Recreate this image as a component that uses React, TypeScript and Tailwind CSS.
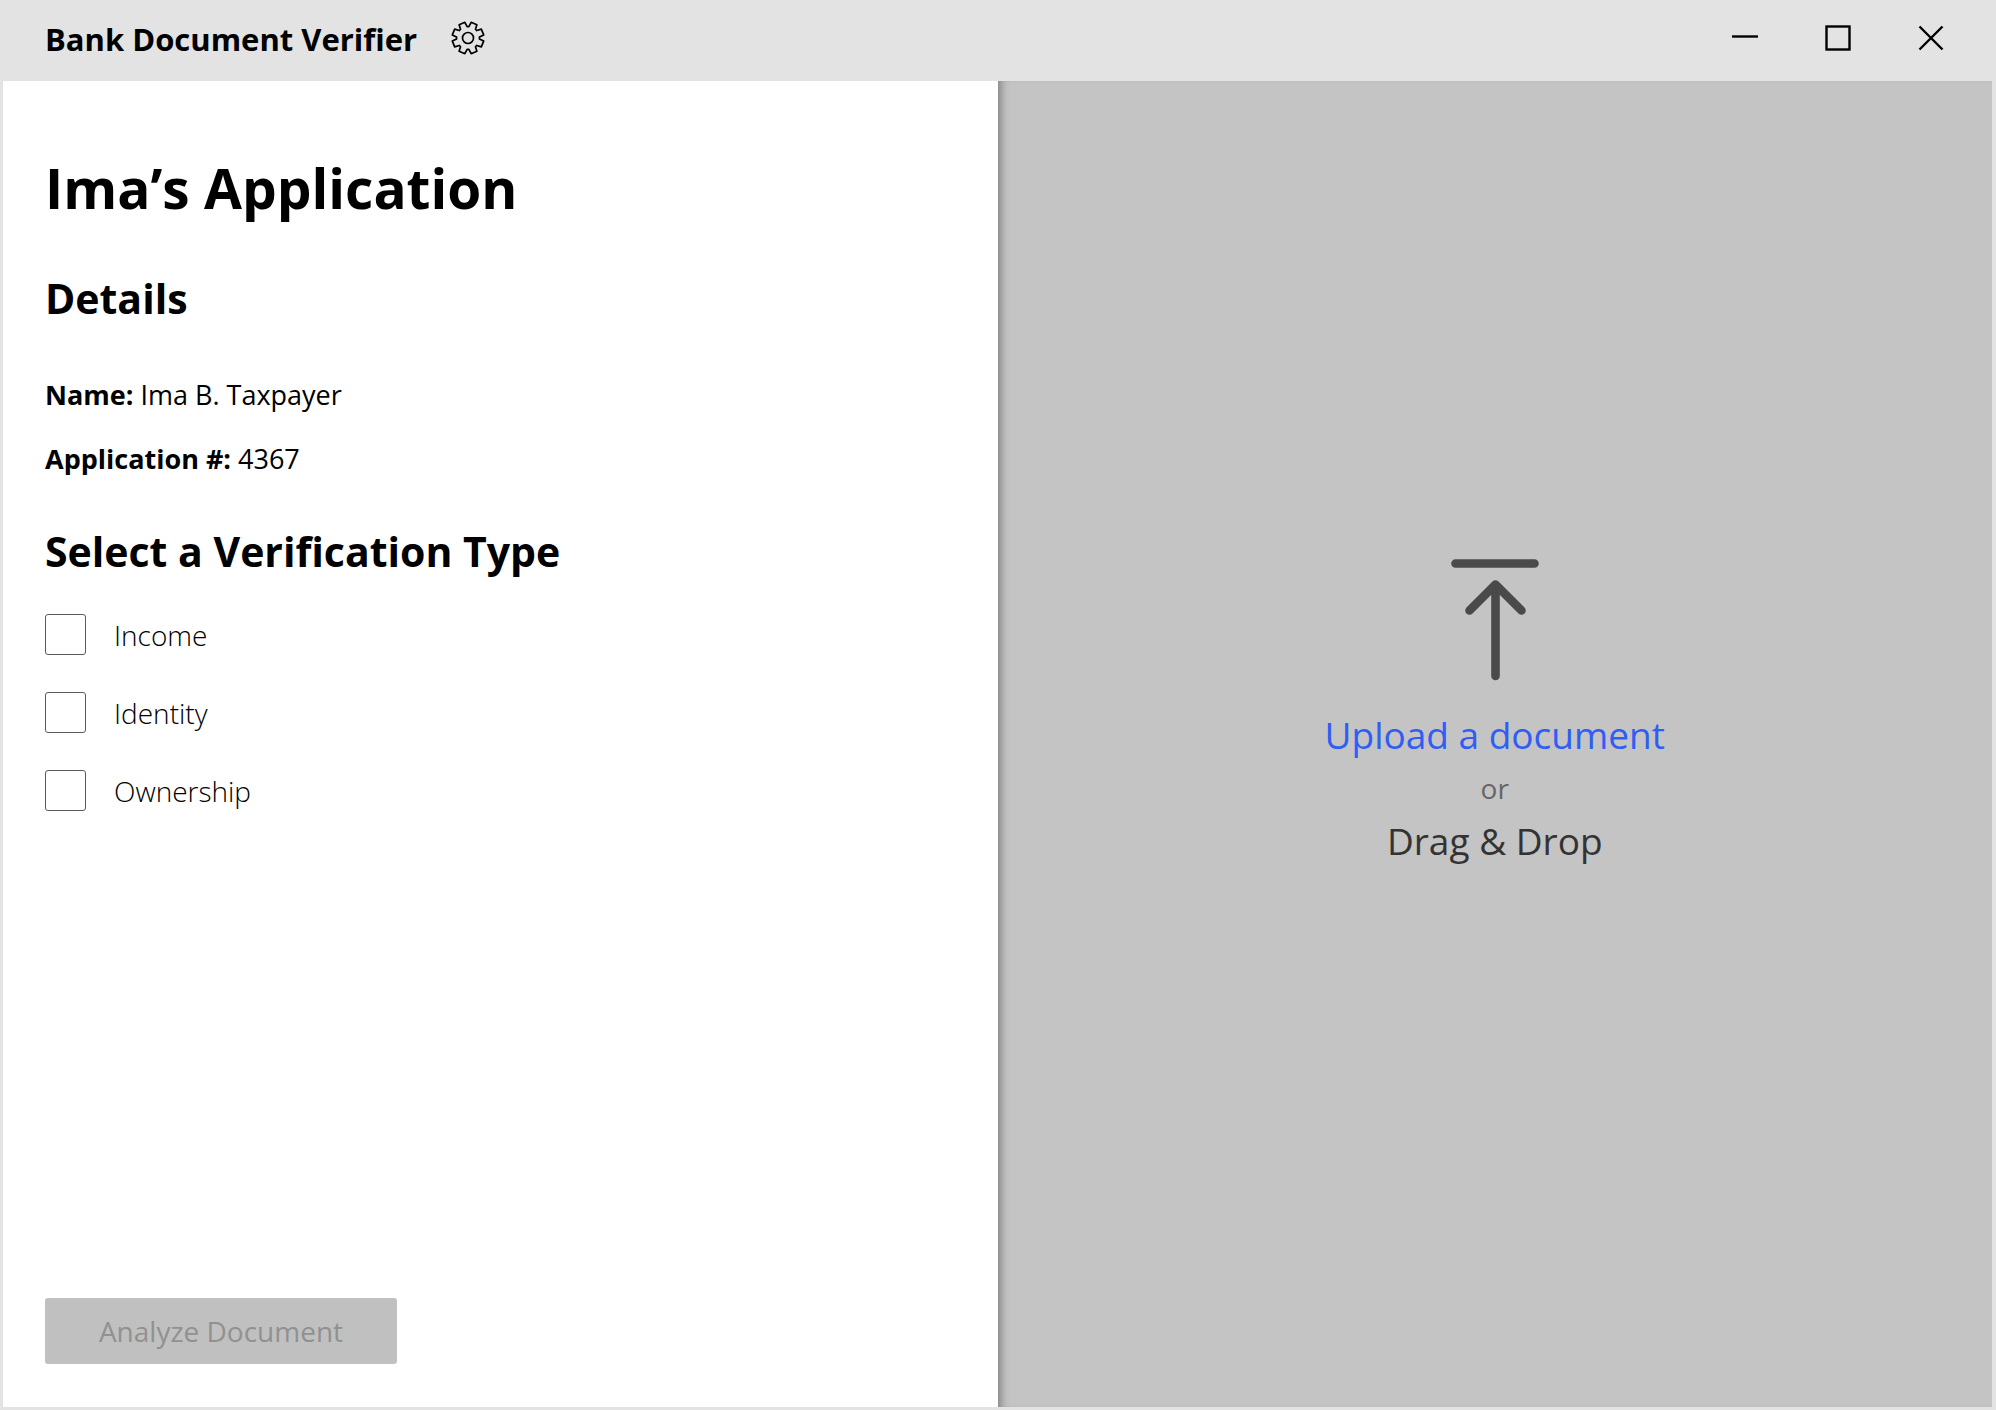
function gearPath(teeth: number, outer: number, inner: number) {
  const points: string[] = [];
  const step = (Math.PI * 2) / teeth;
  for (let i = 0; i < teeth; i++) {
    const mid = -Math.PI / 2 + step * (i + 0.5);
    const corners: [number, number][] = [
      [-0.4, inner],
      [-0.25, outer],
      [0.25, outer],
      [0.4, inner],
    ];
    for (const [offset, radius] of corners) {
      const a = mid + offset * step;
      points.push(`${(17 + radius * Math.cos(a)).toFixed(2)} ${(17 + radius * Math.sin(a)).toFixed(2)}`);
    }
  }
  return `M${points.join("L")}Z`;
}

const GEAR = gearPath(8, 16, 11.5);

function GearIcon() {
  return (
    <svg viewBox="0 0 34 34" className="size-[34px]" fill="none" stroke="black" strokeWidth="1.7" strokeLinejoin="round" aria-hidden="true">
      <path d={GEAR} />
      <circle cx="17" cy="17" r="5.5" />
    </svg>
  );
}

const windowControls = [
  { label: "Minimize", shape: <path d="M0 11.5H26" /> },
  { label: "Maximize", shape: <rect x="1.5" y="1.5" width="23" height="23" /> },
  { label: "Close", shape: <path d="M1.5 1.5L24.5 24.5M24.5 1.5L1.5 24.5" /> },
];

const verificationTypes = ["Income", "Identity", "Ownership"];

export default function App() {
  return (
    <div className="flex min-h-screen flex-col bg-[#e3e3e3] pr-1 pb-[3px] pl-[3px] font-['Open_Sans',sans-serif] text-black">
      <header className="flex h-[81px] items-center justify-between pr-12 pb-[5px] pl-[42px]">
        <div className="flex items-center gap-[34px]">
          <span className="pt-0.5 text-[31px] leading-[44px] font-bold">Bank Document Verifier</span>
          <button type="button" aria-label="Settings">
            <GearIcon />
          </button>
        </div>
        <div className="flex items-center gap-[67px]">
          {windowControls.map(({ label, shape }) => (
            <button key={label} type="button" aria-label={label}>
              <svg viewBox="0 0 26 26" className="size-[26px]" fill="none" stroke="black" strokeWidth="2.4" aria-hidden="true">
                {shape}
              </svg>
            </button>
          ))}
        </div>
      </header>
      <main className="grid flex-1 grid-cols-2">
        <section className="flex flex-col items-start bg-white px-[42px] pt-[67px] pb-[43px]">
          <h1 className="text-[55px] leading-[80px] font-bold">Ima’s Application</h1>
          <h2 className="mt-10 text-[41px] leading-[60px] font-bold">Details</h2>
          <p className="mt-[47px] text-[27px] leading-10">
            <b className="font-bold">Name:</b> Ima B. Taxpayer
          </p>
          <p className="mt-6 text-[27px] leading-10">
            <b className="font-bold">Application #:</b> 4367
          </p>
          <fieldset>
            <legend className="pt-[42px] text-[41px] leading-[60px] font-bold">Select a Verification Type</legend>
            <div className="mt-[33px] flex flex-col items-start gap-[37px]">
              {verificationTypes.map((type) => (
                <label key={type} className="flex items-center gap-7 text-[28px] leading-10 font-light">
                  <input
                    type="checkbox"
                    name="verification"
                    value={type}
                    className="size-[41px] appearance-none rounded-[3px] border border-[#5a5a5a] bg-white checked:bg-[#2f5df5]"
                  />
                  {type}
                </label>
              ))}
            </div>
          </fieldset>
          <button
            type="button"
            disabled
            className="mt-auto w-[352px] rounded-[3px] bg-[#c0c0c0] py-[13px] text-[28px] leading-10 text-[#919191]"
          >
            Analyze Document
          </button>
        </section>
        <section className="flex flex-col items-center justify-center bg-[#c4c4c4] pb-[62px] shadow-[inset_9px_0_9px_-6px_#808080]">
          <svg viewBox="0 0 88 122" className="h-[122px] w-[88px]" fill="none" stroke="#4a4a4a" strokeWidth="8.6" strokeLinecap="round" strokeLinejoin="round" aria-hidden="true">
            <path d="M4.5 4.5H83.5M44.5 117V26M18.5 51.5L44.5 25.5L70.5 51.5" />
          </svg>
          <button type="button" className="mt-7 text-[37px] leading-[52px] text-[#2f5df5]">
            Upload a document
          </button>
          <span className="text-[28px] leading-[54px] text-[#666666]">or</span>
          <span className="text-[37px] leading-[52px] text-[#333333]">Drag &amp; Drop</span>
        </section>
      </main>
    </div>
  );
}
